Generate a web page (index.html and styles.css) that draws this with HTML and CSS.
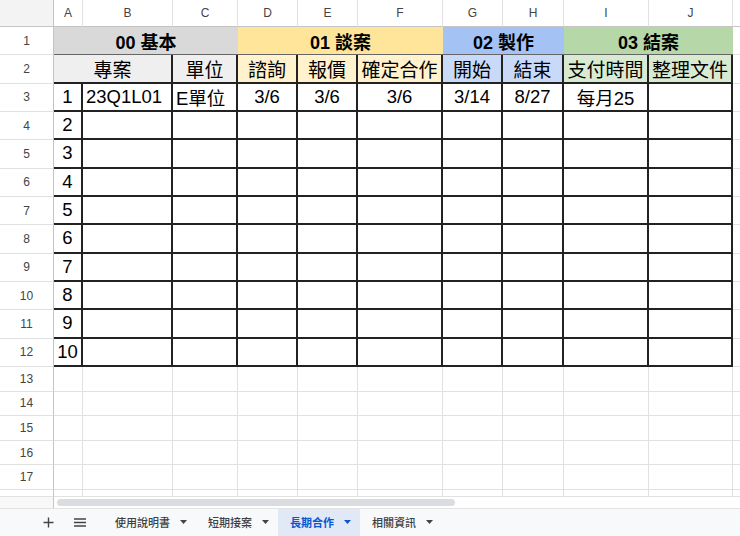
FILE: index.html
```html
<!DOCTYPE html>
<html lang="zh-Hant">
<head>
<meta charset="utf-8">
<title>長期合作</title>
<link rel="stylesheet" href="styles.css">
</head>
<body>
<div class="sheet">
  <div class="c corner"></div>
  <div class="c hd">A</div><div class="c hd">B</div><div class="c hd">C</div><div class="c hd">D</div><div class="c hd">E</div><div class="c hd">F</div><div class="c hd">G</div><div class="c hd">H</div><div class="c hd">I</div><div class="c hd">J</div><div class="c hd k"></div>

  <div class="c rn">1</div>
  <div class="c g s3 grey1">00 基本</div>
  <div class="c g s3 yel1">01 談案</div>
  <div class="c g s2 blu1">02 製作</div>
  <div class="c g s2 grn1">03 結案</div>
  <div class="c k"></div>

  <div class="c rn">2</div>
  <div class="c h s2 grey2">專案</div>
  <div class="c h grey2">單位</div>
  <div class="c h yel2">諮詢</div>
  <div class="c h yel2">報價</div>
  <div class="c h yel2">確定合作</div>
  <div class="c h blu2">開始</div>
  <div class="c h blu2">結束</div>
  <div class="c h grn2">支付時間</div>
  <div class="c h grn2">整理文件</div>
  <div class="c k"></div>

  <div class="c rn">3</div>
  <div class="c d">1</div><div class="c d l">23Q1L01</div><div class="c d l">E單位</div><div class="c d">3/6</div><div class="c d">3/6</div><div class="c d">3/6</div><div class="c d">3/14</div><div class="c d">8/27</div><div class="c d">每月25</div><div class="c d"></div><div class="c k"></div>

  <div class="c rn">4</div>
  <div class="c d">2</div><div class="c d"></div><div class="c d"></div><div class="c d"></div><div class="c d"></div><div class="c d"></div><div class="c d"></div><div class="c d"></div><div class="c d"></div><div class="c d"></div><div class="c k"></div>
  <div class="c rn">5</div>
  <div class="c d">3</div><div class="c d"></div><div class="c d"></div><div class="c d"></div><div class="c d"></div><div class="c d"></div><div class="c d"></div><div class="c d"></div><div class="c d"></div><div class="c d"></div><div class="c k"></div>
  <div class="c rn">6</div>
  <div class="c d">4</div><div class="c d"></div><div class="c d"></div><div class="c d"></div><div class="c d"></div><div class="c d"></div><div class="c d"></div><div class="c d"></div><div class="c d"></div><div class="c d"></div><div class="c k"></div>
  <div class="c rn">7</div>
  <div class="c d">5</div><div class="c d"></div><div class="c d"></div><div class="c d"></div><div class="c d"></div><div class="c d"></div><div class="c d"></div><div class="c d"></div><div class="c d"></div><div class="c d"></div><div class="c k"></div>
  <div class="c rn">8</div>
  <div class="c d">6</div><div class="c d"></div><div class="c d"></div><div class="c d"></div><div class="c d"></div><div class="c d"></div><div class="c d"></div><div class="c d"></div><div class="c d"></div><div class="c d"></div><div class="c k"></div>
  <div class="c rn">9</div>
  <div class="c d">7</div><div class="c d"></div><div class="c d"></div><div class="c d"></div><div class="c d"></div><div class="c d"></div><div class="c d"></div><div class="c d"></div><div class="c d"></div><div class="c d"></div><div class="c k"></div>
  <div class="c rn">10</div>
  <div class="c d">8</div><div class="c d"></div><div class="c d"></div><div class="c d"></div><div class="c d"></div><div class="c d"></div><div class="c d"></div><div class="c d"></div><div class="c d"></div><div class="c d"></div><div class="c k"></div>
  <div class="c rn">11</div>
  <div class="c d">9</div><div class="c d"></div><div class="c d"></div><div class="c d"></div><div class="c d"></div><div class="c d"></div><div class="c d"></div><div class="c d"></div><div class="c d"></div><div class="c d"></div><div class="c k"></div>
  <div class="c rn">12</div>
  <div class="c d">10</div><div class="c d"></div><div class="c d"></div><div class="c d"></div><div class="c d"></div><div class="c d"></div><div class="c d"></div><div class="c d"></div><div class="c d"></div><div class="c d"></div><div class="c k"></div>

  <div class="c rn">13</div>
  <div class="c"></div><div class="c"></div><div class="c"></div><div class="c"></div><div class="c"></div><div class="c"></div><div class="c"></div><div class="c"></div><div class="c"></div><div class="c"></div><div class="c k"></div>
  <div class="c rn">14</div>
  <div class="c"></div><div class="c"></div><div class="c"></div><div class="c"></div><div class="c"></div><div class="c"></div><div class="c"></div><div class="c"></div><div class="c"></div><div class="c"></div><div class="c k"></div>
  <div class="c rn">15</div>
  <div class="c"></div><div class="c"></div><div class="c"></div><div class="c"></div><div class="c"></div><div class="c"></div><div class="c"></div><div class="c"></div><div class="c"></div><div class="c"></div><div class="c k"></div>
  <div class="c rn">16</div>
  <div class="c"></div><div class="c"></div><div class="c"></div><div class="c"></div><div class="c"></div><div class="c"></div><div class="c"></div><div class="c"></div><div class="c"></div><div class="c"></div><div class="c k"></div>
  <div class="c rn">17</div>
  <div class="c"></div><div class="c"></div><div class="c"></div><div class="c"></div><div class="c"></div><div class="c"></div><div class="c"></div><div class="c"></div><div class="c"></div><div class="c"></div><div class="c k"></div>
  <div class="c rn"></div>
  <div class="c"></div><div class="c"></div><div class="c"></div><div class="c"></div><div class="c"></div><div class="c"></div><div class="c"></div><div class="c"></div><div class="c"></div><div class="c"></div><div class="c k"></div>
</div>

<div class="hscroll">
  <div class="hs-left"></div>
  <div class="thumb"></div>
</div>

<div class="tabs">
  <span class="icon plus"><svg width="11" height="11" viewBox="0 0 11 11"><path d="M5.5 0.5v10M0.5 5.5h10" stroke="#444" stroke-width="1.4" fill="none"/></svg></span>
  <span class="icon menu"><svg width="12" height="9" viewBox="0 0 12 9"><path d="M0 1h12M0 4.5h12M0 8h12" stroke="#444" stroke-width="1.3" fill="none"/></svg></span>
  <div class="tab"><span>使用說明書</span><svg class="caret" width="7" height="4" viewBox="0 0 7 4"><path d="M0 0h7L3.5 4z"/></svg></div>
  <div class="tab"><span>短期接案</span><svg class="caret" width="7" height="4" viewBox="0 0 7 4"><path d="M0 0h7L3.5 4z"/></svg></div>
  <div class="tab active"><span>長期合作</span><svg class="caret" width="7" height="4" viewBox="0 0 7 4"><path d="M0 0h7L3.5 4z"/></svg></div>
  <div class="tab"><span>相關資訊</span><svg class="caret" width="7" height="4" viewBox="0 0 7 4"><path d="M0 0h7L3.5 4z"/></svg></div>
</div>
</body>
</html>
```

FILE: styles.css
```css
* { box-sizing: border-box; margin: 0; padding: 0; }
html, body { width: 740px; height: 536px; overflow: hidden; }
body {
  font-family: "Liberation Sans", Arial, "Noto Sans CJK TC", sans-serif;
  background: #fff;
  color: #000;
  display: flex;
  flex-direction: column;
}

.sheet {
  display: grid;
  grid-template-columns: 54px 29px 90px 65px 60px 60px 85px 60px 61px 85px 84px 7px;
  grid-template-rows: 27px repeat(12, 28.333px) repeat(5, 24.6px) 7px;
  flex: none;
}

.c {
  border-right: 1px solid #e1e1e1;
  border-bottom: 1px solid #e1e1e1;
  display: flex;
  align-items: center;
  justify-content: center;
  white-space: nowrap;
  overflow: hidden;
  font-size: 18.5px;
}
.k { border-right: 0; }

.corner { background: #f3f3f3; border-right-color: #c4c4c4; border-bottom-color: #c4c4c4; }
.hd { font-size: 12px; color: #444; border-bottom-color: #c4c4c4; }
.rn { font-size: 12px; color: #444; border-right-color: #c4c4c4; }

.s2 { grid-column: span 2; }
.s3 { grid-column: span 3; }

.g {
  font-weight: bold;
  font-size: 18px;
  border-right: 0;
  border-bottom: 1px solid #666;
}
.h {
  font-size: 19px;
  border-right: 2px solid #222;
  border-bottom: 2px solid #222;
}
.d {
  border-right: 2px solid #222;
  border-bottom: 2px solid #222;
}
.l { justify-content: flex-start; padding-left: 3px; }

.grey1 { background: #d9d9d9; }
.yel1 { background: #ffe599; }
.blu1 { background: #a4c2f4; }
.grn1 { background: #b6d7a8; }
.grey2 { background: #efefef; }
.yel2 { background: #fff2cc; }
.blu2 { background: #c9daf8; }
.grn2 { background: #d9ead3; }

.hscroll {
  height: 11px;
  display: flex;
  align-items: center;
  flex: none;
}
.hs-left {
  width: 54px;
  height: 100%;
  border-right: 1px solid #c4c4c4;
  background: #f8f8f8;
}
.thumb {
  margin-left: 3px;
  width: 398px;
  height: 7px;
  border-radius: 4px;
  background: #dadce0;
}

.tabs {
  height: 28px;
  flex: none;
  background: #f8f9fa;
  border-top: 1px solid #e3e3e3;
  display: flex;
  align-items: stretch;
  padding-left: 43px;
}
.icon { display: flex; align-items: center; }
.plus { margin-right: 20px; }
.menu { margin-right: 17px; }
.tab {
  display: flex;
  align-items: center;
  gap: 10px;
  padding: 0 9px 0 12px;
  font-size: 11px;
  font-weight: 500;
  color: #3c4043;
}
.tab .caret { fill: #444; }
.tab.active { background: #e1e9f7; color: #0b57d0; font-weight: 700; }
.tab.active .caret { fill: #0b57d0; }
```
